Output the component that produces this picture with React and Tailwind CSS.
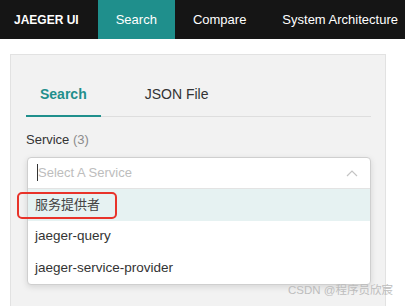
import React from 'react'

export default function App() {
  const font = { fontFamily: '"Liberation Sans", "Noto Sans CJK SC", sans-serif' }

  return (
    <div className="relative w-[405px] h-[306px] overflow-hidden bg-white text-[13px]" style={font}>
      {/* Top nav */}
      <div className="flex h-[39px] bg-[#151515] text-white whitespace-nowrap text-[13px]">
        <div className="shrink-0 flex items-center pl-[14px] pr-[19px] font-bold text-[12px]">JAEGER UI</div>
        <div className="shrink-0 flex items-center px-[18px] bg-[#1f8f8c]">Search</div>
        <div className="shrink-0 flex items-center px-[18px]">Compare</div>
        <div className="shrink-0 flex items-center px-[18px]">System Architecture</div>
      </div>

      {/* Panel */}
      <div className="ml-[10px] mt-[15px] w-[376px] h-[300px] bg-[#f2f2f2] border border-[#e2e2e2] px-[15px] pt-[29px]">
        {/* Tabs */}
        <div className="flex border-b border-[#dedede] mr-[-1px] text-[14px]">
          <div className="px-[14px] pb-[10px] text-[#1f8f8c] font-bold border-b-2 border-[#1f8f8c] mb-[-1px]">Search</div>
          <div className="ml-[30px] px-[14px] pb-[10px] text-[#333]">JSON File</div>
        </div>

        <div className="mt-[13px] text-[#333]">
          Service <span className="text-[#8c8c8c]">(3)</span>
        </div>

        {/* Select + dropdown */}
        <div className="mt-[7px] ml-[1px] w-[344px] bg-white border border-[#cfcfcf] rounded-[4px] shadow-[0_2px_6px_rgba(0,0,0,0.12)]">
          <div className="flex items-center h-[30px] pl-[9px] pr-[12px]">
            <span className="w-px h-[17px] bg-[#333]"></span>
            <span className="text-[#bdbdbd]">Select A Service</span>
            <svg className="ml-auto" width="12" height="8" viewBox="0 0 12 8" fill="none">
              <path d="M1 7 L6 2 L11 7" stroke="#c4c4c4" strokeWidth="1.2" />
            </svg>
          </div>
          <div className="border-t border-[#e3e3e3] text-[13.5px]">
            <div className="h-[32px] flex items-center pl-[7px] bg-[#e6f2f2] text-[#444] text-[13px]">服务提供者</div>
            <div className="h-[32px] flex items-center pl-[7px] text-[#333]">jaeger-query</div>
            <div className="h-[31px] flex items-center pl-[7px] text-[#333]">jaeger-service-provider</div>
          </div>
        </div>
      </div>

      {/* Red highlight box */}
      <div className="absolute left-[17px] top-[192px] w-[100px] h-[27px] border-2 border-[#e8332a] rounded-[5px]"></div>

      {/* Watermark */}
      <div className="absolute left-[288px] top-[282px] text-[11.5px] text-[#bdbdbd] whitespace-nowrap">CSDN @程序员欣宸</div>
    </div>
  )
}
